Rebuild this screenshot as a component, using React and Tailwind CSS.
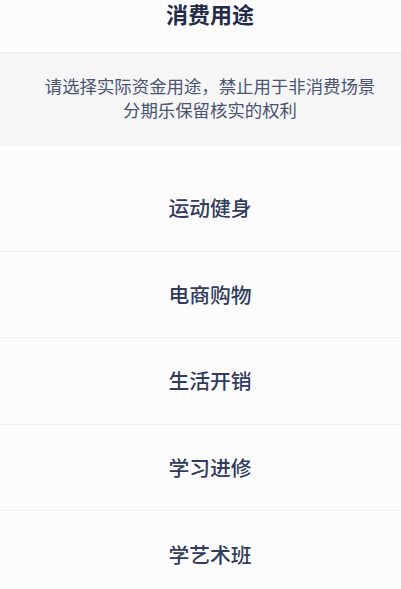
import React from 'react';

const purposes = ['运动健身', '电商购物', '生活开销', '学习进修', '学艺术班'];

// 消费用途选择
export default function App() {
  return (
    <div
      className="min-h-[589px] bg-[#fcfcfd] pl-[19px]"
      style={{ fontFamily: '"Noto Sans CJK SC", "Noto Sans", sans-serif' }}
    >
      {/* 标题 */}
      <div className="h-[52px] text-center -ml-[19px] pl-[19px]">
        <h1 className="text-[22px] leading-[26px] font-bold text-[#222c47]">消费用途</h1>
      </div>

      {/* 提示 */}
      <div className="h-[93px] bg-[#f6f6f7] border-t border-[#efeff1] flex flex-col items-center justify-center pb-[3px] -ml-[19px] pl-[19px]">
        <p className="text-[17.4px] leading-[24px] text-[#4b5470] text-center">
          请选择实际资金用途，禁止用于非消费场景
          <br />
          分期乐保留核实的权利
        </p>
      </div>

      {/* 列表 */}
      <ul className="pt-[20px] -ml-[19px]">
        {purposes.map((item, i) => (
          <li
            key={item}
            className={`h-[86.5px] pl-[19px] flex items-center justify-center text-[20.8px] font-medium text-[#323d5c] ${
              i < purposes.length - 1 ? 'border-b border-[#efeff1]' : ''
            }`}
          >
            {item}
          </li>
        ))}
      </ul>
    </div>
  );
}
